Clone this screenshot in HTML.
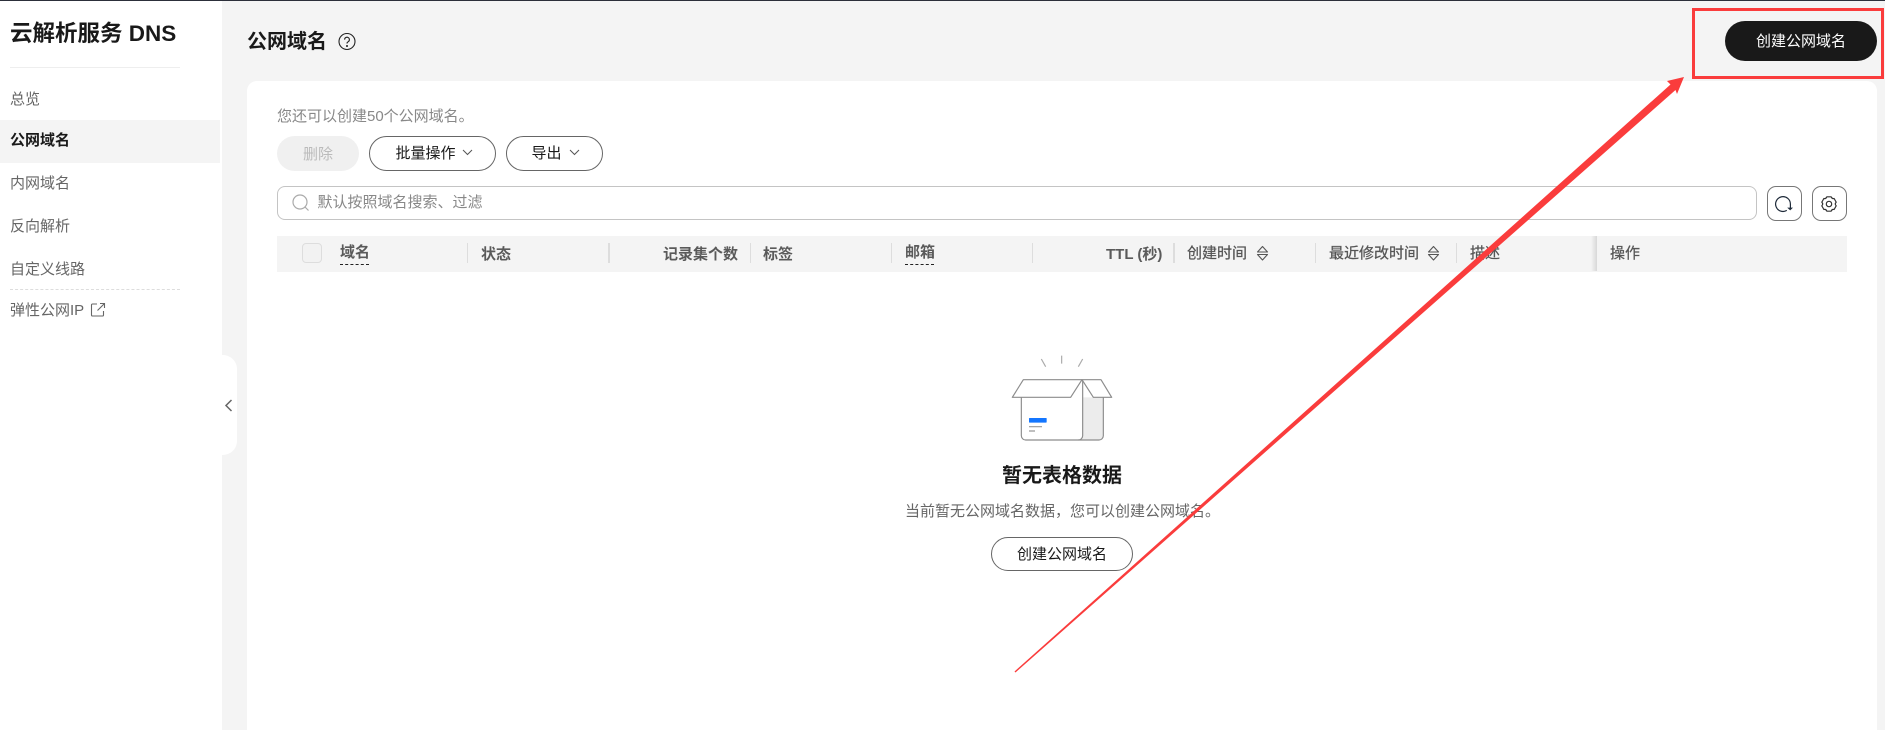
<!DOCTYPE html>
<html lang="zh"><head><meta charset="utf-8"><title>云解析服务 DNS</title>
<style>
html,body{margin:0;padding:0;width:1885px;height:730px;overflow:hidden}
body{position:relative;background:#f4f4f4;font-family:"Liberation Sans","Noto Sans CJK SC",sans-serif;color:#191919}
.a{position:absolute;white-space:nowrap}
.t{position:absolute;white-space:nowrap;height:20px;line-height:20px;font-size:15px}
.m{color:#666}
.h{font-weight:700;color:#5a5a5a;font-size:15px}
.g{color:#555;font-size:15px;-webkit-text-stroke:.25px #555}
.s{position:absolute;top:243px;height:20px;width:1px;background:#ddd}
.b{position:absolute;box-sizing:border-box;border:1px solid #666;border-radius:20px;background:#fff;text-align:center}
</style></head><body>
<div class="a" style="left:0;top:0;width:1885px;height:1px;background:#2c2f3a;z-index:3"></div>
<!-- sidebar -->
<div class="a" style="left:0;top:0;width:222px;height:730px;background:#fff"></div>
<div class="a" style="left:10px;top:19px;height:30px;line-height:30px;font-size:22.500px;font-weight:700">云解析服务 DNS</div>
<div class="a" style="left:10px;top:67px;width:170px;height:1px;background:#eee"></div>
<div class="a" style="left:0;top:120px;width:220px;height:43px;background:#f4f4f4"></div>
<div class="t m" style="left:10px;top:90px">总览</div>
<div class="t" style="left:10px;top:131px;font-weight:700">公网域名</div>
<div class="t m" style="left:10px;top:174px">内网域名</div>
<div class="t m" style="left:10px;top:217px">反向解析</div>
<div class="t m" style="left:10px;top:260px">自定义线路</div>
<div class="a" style="left:10px;top:289px;width:170px;height:0;border-top:1px dashed #ddd"></div>
<div class="t m" style="left:10px;top:301px">弹性公网IP</div>
<svg class="a" style="left:90px;top:302px" width="16" height="16" viewBox="0 0 16 16" fill="none" stroke="#666" stroke-width="1.100"><path d="M7 2H2.500A1 1 0 0 0 1.500 3v10a1 1 0 0 0 1 1h10a1 1 0 0 0 1-1V9M7.500 8.500 14 2M10 1.500h4.500V6"/></svg>
<!-- collapse -->
<div class="a" style="left:222px;top:355px;width:15px;height:100px;background:#fff;border-radius:0 14px 14px 0"></div>
<svg class="a" style="left:222px;top:396px" width="15" height="18" viewBox="0 0 15 18" fill="none" stroke="#666" stroke-width="1.500"><path d="M9.500 4 4 9.500 9.500 15"/></svg>
<!-- header -->
<div class="a" style="left:247px;top:28px;height:28px;line-height:28px;font-size:20px;font-weight:700">公网域名</div>
<svg class="a" style="left:337px;top:32px" width="20" height="20" viewBox="0 0 20 20" fill="none" stroke="#222" stroke-width="1.100"><circle cx="10" cy="9.500" r="8"/><path d="M7.600 7.600a2.400 2.400 0 1 1 3.600 2.100c-.8.500-1.200.9-1.200 1.800"/><circle cx="10" cy="14" r=".5" fill="#222"/></svg>
<div class="a" style="left:1725px;top:21px;width:152px;height:40px;border-radius:20px;background:#191919;color:#fff;font-size:15px;line-height:41px;text-align:center">创建公网域名</div>
<!-- card -->
<div class="a" style="left:247px;top:81px;width:1630px;height:649px;background:#fff;border-radius:10px 10px 0 0"></div>
<div class="t" style="left:277px;top:107px;color:#888;font-size:15px">您还可以创建50个公网域名。</div>
<div class="a" style="left:277px;top:136px;width:82px;height:35px;border-radius:18px;background:#f0f0f0;color:#bbb;font-size:15px;line-height:37px;text-align:center">删除</div>
<div class="b" style="left:369px;top:136px;width:127px;height:35px;line-height:34px;font-size:15px;padding-right:14px">批量操作</div>
<svg class="a" style="left:461px;top:147px" width="13" height="12" fill="none" stroke="#555" stroke-width="1"><path d="M2 3 6.500 7.500 11 3"/></svg>
<div class="b" style="left:506px;top:136px;width:97px;height:35px;line-height:34px;font-size:15px;padding-right:16px">导出</div>
<svg class="a" style="left:568px;top:147px" width="13" height="12" fill="none" stroke="#555" stroke-width="1"><path d="M2 3 6.500 7.500 11 3"/></svg>
<!-- search -->
<div class="a" style="left:277px;top:186px;width:1480px;height:34px;box-sizing:border-box;border:1px solid #c4c4c4;border-radius:8px;background:#fff"></div>
<svg class="a" style="left:291px;top:193px" width="20" height="20" fill="none" stroke="#aaa" stroke-width="1.200"><circle cx="9" cy="9" r="7"/><path d="m14 14 3.500 3.500"/></svg>
<div class="t" style="left:317.500px;top:193px;color:#888;font-size:15px">默认按照域名搜索、过滤</div>
<div class="a" style="left:1767px;top:186px;width:35px;height:35px;box-sizing:border-box;border:1px solid #777;border-radius:9px;background:#fff"></div>
<svg class="a" style="left:1773px;top:194px" width="20" height="20" fill="none" stroke="#1f2b3a" stroke-width="1.200"><path d="M13.800 16.400A7.400 7.400 0 1 1 17.400 10v5"/><path d="M14.200 13.600h5.800L17.200 16.400z" fill="#1f2b3a" stroke="none"/></svg>
<div class="a" style="left:1812px;top:186px;width:35px;height:35px;box-sizing:border-box;border:1px solid #777;border-radius:9px;background:#fff"></div>
<svg class="a" style="left:1819px;top:194px" width="20" height="20" fill="none" stroke="#333" stroke-width="1.300" stroke-linejoin="round"><g transform="translate(10 10) scale(.9) translate(-10 -10)"><path d="M7.600 2h4.800c.6 1.800 1.500 2.300 3.300 1.900l2.300 4.100c-1.300 1.300-1.300 2.700 0 4l-2.300 4.100c-1.800-.4-2.700.1-3.300 1.900H7.600c-.6-1.800-1.500-2.300-3.300-1.900L2 12c1.300-1.300 1.300-2.700 0-4l2.300-4.100c1.800.4 2.700-.1 3.300-1.900z"/><circle cx="10" cy="10" r="3"/></g></svg>
<!-- table header -->
<div class="a" style="left:277px;top:236px;width:1570px;height:36px;background:#f4f4f4"></div>
<div class="a" style="left:302px;top:243px;width:20px;height:20px;box-sizing:border-box;border:1px solid #ddd;border-radius:4px;background:#f2f2f2"></div>
<div class="t h" style="left:340px;top:243px">域名</div>
<div class="a" style="left:340px;top:264px;width:29px;height:0;border-top:1px dashed #222"></div>
<div class="s" style="left:467px"></div>
<div class="t h" style="left:481px;top:245px">状态</div>
<div class="s" style="left:608px;width:2px"></div>
<div class="t h" style="left:663px;top:245px">记录集个数</div>
<div class="s" style="left:750px"></div>
<div class="t h" style="left:763px;top:245px">标签</div>
<div class="s" style="left:891px"></div>
<div class="t h" style="left:905px;top:243px">邮箱</div>
<div class="a" style="left:905px;top:264px;width:29px;height:0;border-top:1px dashed #222"></div>
<div class="s" style="left:1032px"></div>
<div class="t h" style="left:1106px;top:245px">TTL (秒)</div>
<div class="s" style="left:1173px;width:2px"></div>
<div class="t g" style="left:1187px;top:244px">创建时间</div>
<svg class="a" style="left:1256px;top:245px" width="13" height="17" fill="none" stroke="#555" stroke-width="1.100" stroke-linejoin="round"><path d="M1.500 7 6.500 1.500 11.500 7zM1.500 9.500h10L6.500 15z"/></svg>
<div class="s" style="left:1315px"></div>
<div class="t g" style="left:1329px;top:244px">最近修改时间</div>
<svg class="a" style="left:1427px;top:245px" width="13" height="17" fill="none" stroke="#555" stroke-width="1.100" stroke-linejoin="round"><path d="M1.500 7 6.500 1.500 11.500 7zM1.500 9.500h10L6.500 15z"/></svg>
<div class="s" style="left:1456px"></div>
<div class="t g" style="left:1470px;top:244px">描述</div>
<div class="a" style="left:1591px;top:236px;width:6px;height:35px;background:linear-gradient(90deg,#f4f4f4,#d8d8d8)"></div>
<div class="t g" style="left:1610px;top:244px">操作</div>
<!-- empty state -->
<svg class="a" style="left:980px;top:345px" width="150" height="110" viewBox="0 0 450 330" fill="none" stroke="#8c8c8c" stroke-width="3.500" stroke-linejoin="round">
<path d="M308 157h62v115a13 13 0 0 1-13 13h-62a13 13 0 0 0 13-13z" fill="#ececec" stroke="none"/>
<path d="M124 157v115a13 13 0 0 0 13 13h158a13 13 0 0 0 13-13V104"/>
<path d="M295 285h62a13 13 0 0 0 13-13V157"/>
<path d="M130 104h176l-34 53H97z" fill="#fff"/>
<path d="M306 104h57l32 53h-55z" fill="#fff"/>
<path d="M184 42l13 23M245 32v24M308 42l-13 23" stroke="#aaa"/>
<rect x="147" y="219" width="53" height="14" rx="2" fill="#1476ff" stroke="none"/>
<path d="M147 245h39M147 258h18" stroke="#999"/>
</svg>
<div class="a" style="left:962px;top:462px;width:200px;height:28px;line-height:28px;font-size:20px;font-weight:700;text-align:center">暂无表格数据</div>
<div class="t" style="left:905px;top:502px;color:#666;font-size:15px">当前暂无公网域名数据，您可以创建公网域名。</div>
<div class="b" style="left:991px;top:537px;width:142px;height:34px;line-height:33px;font-size:15px">创建公网域名</div>
<!-- annotation -->
<svg class="a" style="left:0;top:0;z-index:5" width="1885" height="730" fill="none">
<rect x="1693.500" y="9.500" width="189" height="68" stroke="#fa3c3c" stroke-width="3"/>
<path d="M1014.500 671.500 1670.500 84.500 1667 81 1684 77 1677 94 1675.500 90 1015.500 672.500Z" fill="#fa3c3c"/>
</svg>
</body></html>
